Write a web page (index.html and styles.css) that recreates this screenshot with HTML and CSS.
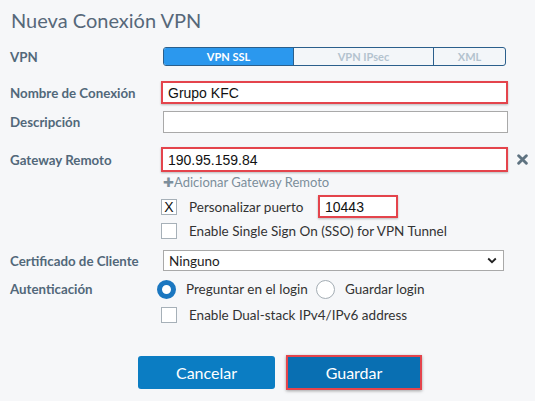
FILE: index.html
```html
<!DOCTYPE html>
<html>
<head>
<meta charset="utf-8">
<link rel="stylesheet" href="styles.css">
</head>
<body>
<div class="panel">
  <h1 class="title">Nueva Conexión VPN</h1>

  <div class="row r-vpn">
    <div class="label">VPN</div>
    <div class="seg">
      <div class="seg-item active s1">VPN SSL</div>
      <div class="seg-item s2">VPN IPsec</div>
      <div class="seg-item s3">XML</div>
    </div>
  </div>

  <div class="row r-name">
    <div class="label">Nombre de Conexión</div>
    <div class="input red wide">Grupo KFC</div>
  </div>

  <div class="row r-desc">
    <div class="label">Descripción</div>
    <div class="input desc"></div>
  </div>

  <div class="row r-gw">
    <div class="label">Gateway Remoto</div>
    <div class="ctl">
      <div class="input red wide gw">190.95.159.84</div>
      <svg class="xicon" width="11" height="11" viewBox="0 0 10 10"><path d="M1.5 1.5 L8.5 8.5 M8.5 1.5 L1.5 8.5" stroke="#5f7381" stroke-width="2.6" stroke-linecap="round"/></svg>
    </div>
  </div>

  <div class="row r-add">
    <div class="label"></div>
    <div class="addlink">✚Adicionar Gateway Remoto</div>
  </div>

  <div class="row r-port">
    <div class="label"></div>
    <div class="ctl">
      <div class="cb">X</div>
      <span class="txt t-port">Personalizar puerto</span>
      <div class="input red port">10443</div>
    </div>
  </div>

  <div class="row r-sso">
    <div class="label"></div>
    <div class="ctl">
      <div class="cb"></div>
      <span class="txt">Enable Single Sign On (SSO) for VPN Tunnel</span>
    </div>
  </div>

  <div class="row r-cert">
    <div class="label">Certificado de Cliente</div>
    <div class="select">
      <span>Ninguno</span>
      <svg width="10" height="7" viewBox="0 0 10 7"><path d="M1.2 1.5 L5 5.2 L8.8 1.5" fill="none" stroke="#222" stroke-width="1.8"/></svg>
    </div>
  </div>

  <div class="row r-auth">
    <div class="label">Autenticación</div>
    <div class="ctl radios">
      <div class="radio on"></div>
      <span class="txt t-r1">Preguntar en el login</span>
      <div class="radio"></div>
      <span class="txt t-r2">Guardar login</span>
    </div>
  </div>

  <div class="row r-dual">
    <div class="label"></div>
    <div class="ctl">
      <div class="cb"></div>
      <span class="txt">Enable Dual-stack IPv4/IPv6 address</span>
    </div>
  </div>

  <div class="buttons">
    <div class="btn cancel">Cancelar</div>
    <div class="btn save">Guardar</div>
  </div>
</div>
</body>
</html>
```

FILE: styles.css
```css
html, body {
  margin: 0;
  padding: 0;
  background: #ffffff;
}
body {
  width: 553px;
  height: 401px;
  overflow: hidden;
  font-family: Lato, "Noto Sans", sans-serif;
}
.panel {
  width: 525px;
  height: 401px;
  background: #f6f7f9;
  padding-left: 10px;
  box-sizing: content-box;
}
.title {
  margin: 0 0 0 1px;
  padding-top: 6px;
  height: 27px;
  font-size: 20px;
  line-height: 28px;
  font-weight: 400;
  color: #56687a;
}
.row {
  display: grid;
  grid-template-columns: 151px 1fr;
  align-items: center;
}
.label {
  font-size: 13.3px;
  font-weight: 700;
  color: #52687a;
}
.r-vpn { margin-top: 14px; height: 19px; }
.r-name { margin-top: 15px; height: 23px; }
.r-desc { margin-top: 7px; height: 22px; }
.r-gw { margin-top: 14px; height: 25px; }
.r-add { margin-top: 2px; height: 16px; }
.r-port { margin-top: 5px; height: 23px; }
.r-sso { margin-top: 4px; height: 18px; }
.r-cert { margin-top: 10px; height: 21px; }
.r-auth { margin-top: 8px; height: 20px; }
.r-dual { margin-top: 7px; height: 18px; }

.seg {
  display: flex;
  margin-left: 2px;
  width: 343px;
  height: 19px;
  border: 1px solid #2b5f8c;
  border-radius: 3px;
  box-sizing: border-box;
  overflow: hidden;
  background: #f3f6f9;
}
.seg-item {
  font-size: 11px;
  font-weight: 700;
  color: #b3c3cf;
  display: flex;
  align-items: center;
  justify-content: center;
}
.seg-item.active {
  background: #2b98ee;
  color: #ffffff;
}
.s1 { width: 129px; }
.s2 { width: 139px; border-left: 1px solid #2b5f8c; border-right: 1px solid #2b5f8c; }
.s3 { flex: 1; }

.input {
  background: #ffffff;
  border: 1px solid #a9a9a9;
  box-sizing: border-box;
  font-family: "Liberation Sans", Arial, sans-serif;
  font-size: 14px;
  color: #111;
  display: flex;
  align-items: center;
  padding-left: 5px;
}
.input.red {
  border: 2px solid #e4444c;
  box-shadow: 0 1px 2px rgba(0,0,0,0.25);
}
.wide { width: 347px; height: 23px; }
.gw { height: 25px; }
.desc { margin-left: 2px; width: 345px; height: 22px; }
.ctl {
  display: flex;
  align-items: center;
}
.xicon { margin-left: 9px; }
.addlink {
  margin-left: 2px;
  font-size: 13px;
  color: #7c8e9b;
}
.cb {
  width: 16px;
  height: 16px;
  border: 1px solid #a6b0b8;
  background: #fff;
  box-sizing: border-box;
  font-family: "Liberation Sans", Arial, sans-serif;
  font-size: 14px;
  line-height: 15px;
  text-align: center;
  color: #111;
}
.txt {
  font-size: 13.5px;
  color: #333;
  margin-left: 12px;
}
.t-port { width: 117px; }
.port {
  margin-left: 12px;
  width: 80px;
  height: 23px;
}
.select {
  margin-left: 2px;
  width: 341px;
  height: 21px;
  box-sizing: border-box;
  border: 1px solid #a9a9a9;
  background: #fff;
  display: flex;
  align-items: center;
  justify-content: space-between;
  padding: 0 6px 0 5px;
  font-size: 13.5px;
  color: #222;
}
.radios { margin-left: -4px; }
.radio {
  width: 19px;
  height: 19px;
  box-sizing: border-box;
  border: 1px solid #a4adb4;
  border-radius: 50%;
  background: #fff;
}
.radio.on {
  border: 5px solid #1b77c0;
}
.t-r1 { margin-left: 10px; width: 130px; }
.t-r2 { margin-left: 10px; }

.buttons {
  display: flex;
  margin-top: 31px;
  margin-left: 128px;
  gap: 11px;
  align-items: center;
}
.btn {
  font-size: 16px;
  color: #fff;
  display: flex;
  align-items: center;
  justify-content: center;
  box-sizing: border-box;
  border-radius: 3px;
}
.cancel {
  width: 137px;
  height: 33px;
  background: #0b7dc3;
}
.save {
  width: 136px;
  height: 35px;
  background: #096fb2;
  border: 2px solid #e4444c;
  border-radius: 0;
  box-shadow: 0 1px 3px rgba(0,0,0,0.35);
}
```
